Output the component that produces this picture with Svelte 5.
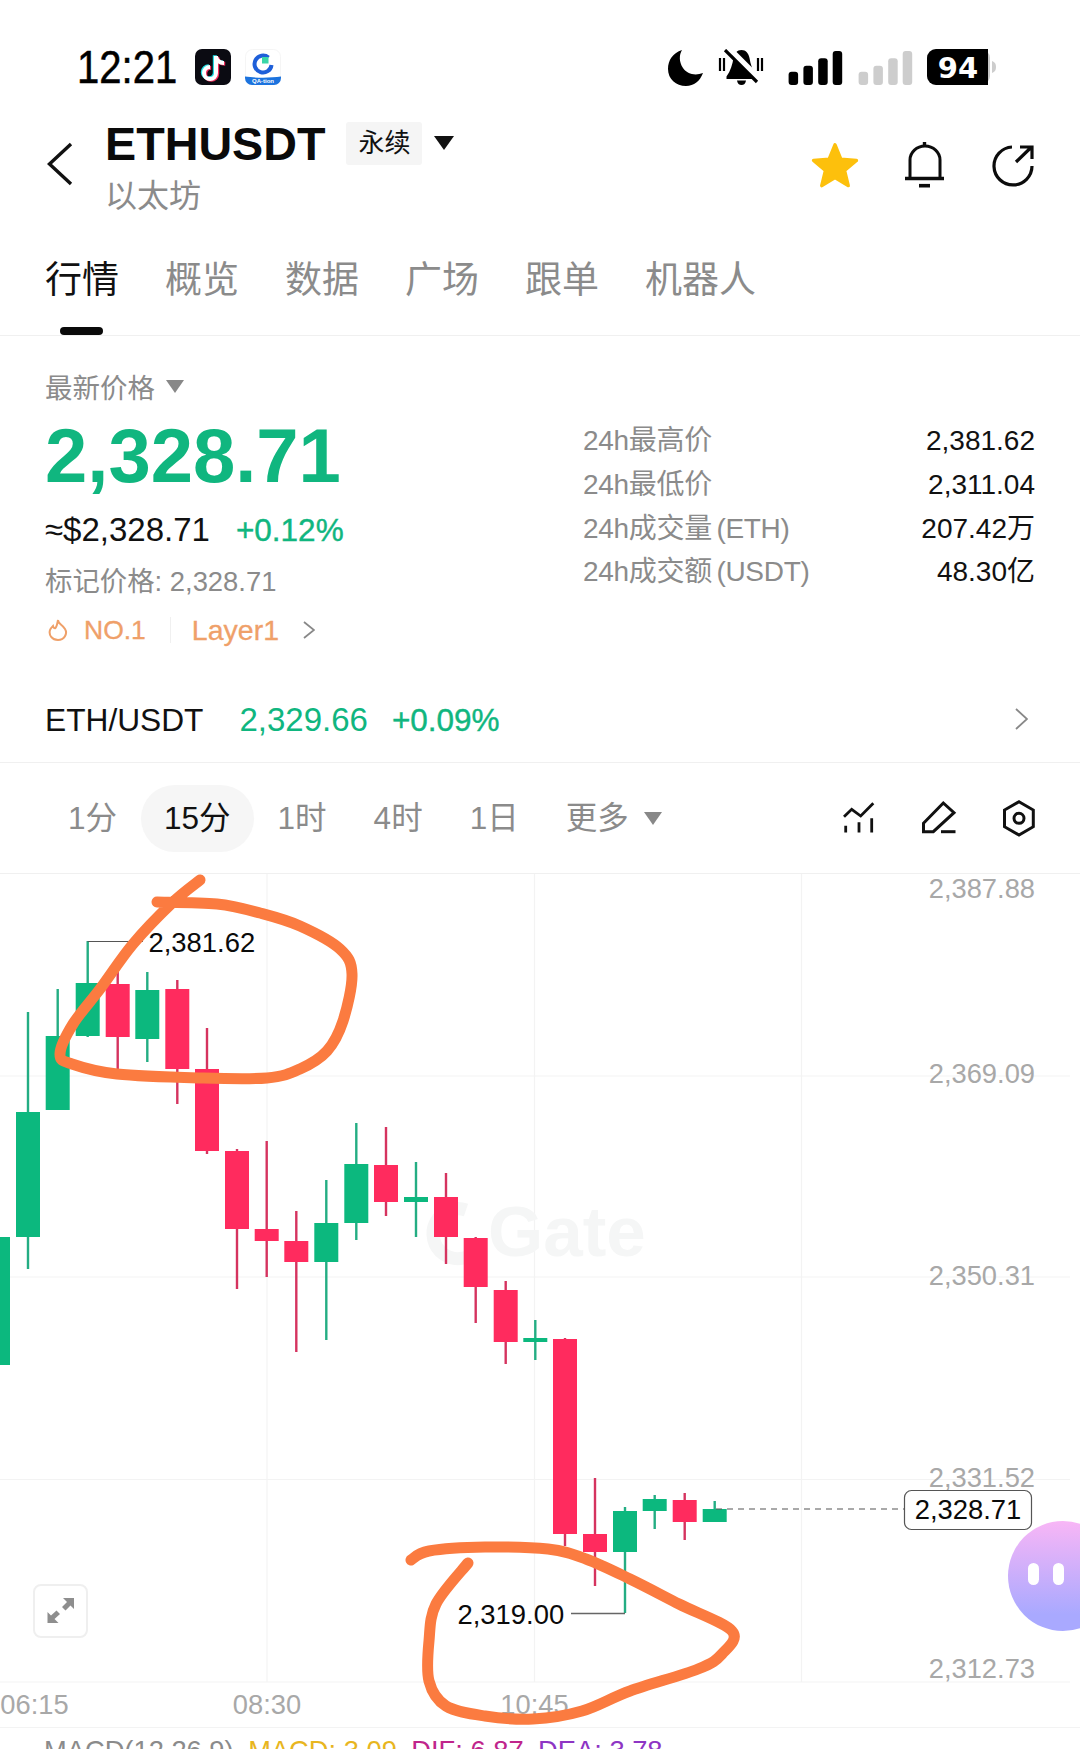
<script>
  // tabs + timeframes
  const tabs = ['行情', '概览', '数据', '广场', '跟单', '机器人'];
  const frames = ['1分', '15分', '1时', '4时', '1日'];
  const stats = [
    ['24h最高价', '2,381.62'],
    ['24h最低价', '2,311.04'],
    ['24h成交量 (ETH)', '207.42万'],
    ['24h成交额 (USDT)', '48.30亿']
  ];

  // candles: x, wick top, wick bottom, body top, body bottom, up?
  const candles = [
    [-2, 1237, 1365, 1237, 1365, 1],
    [28, 1012, 1269, 1112, 1237, 1],
    [57.7, 989, 1110, 1036, 1110, 1],
    [87.7, 941, 1037, 983, 1036, 1],
    [117.7, 966, 1069, 984, 1037, 0],
    [147.3, 972, 1062, 990, 1039, 1],
    [177.3, 980, 1104, 989, 1069, 0],
    [207, 1028, 1154, 1069, 1151, 0],
    [237, 1149, 1289, 1151, 1229, 0],
    [266.7, 1141, 1277, 1229, 1241, 0],
    [296.3, 1211, 1352, 1241, 1262, 0],
    [326.3, 1180, 1340, 1223, 1262, 1],
    [356.3, 1123, 1240, 1164, 1223, 1],
    [386, 1127, 1216, 1165, 1202, 0],
    [416, 1162, 1237, 1197, 1202, 1],
    [446, 1173, 1264, 1197, 1237, 0],
    [475.7, 1237, 1323, 1238, 1287, 0],
    [505.7, 1281, 1364, 1290, 1342, 0],
    [535.3, 1320, 1360, 1338, 1342, 1],
    [565, 1338, 1546, 1339, 1534, 0],
    [595, 1478, 1586, 1534, 1552, 0],
    [625, 1507, 1613, 1511, 1552, 1],
    [654.7, 1495, 1529, 1499, 1511, 1],
    [684.7, 1493, 1540, 1500, 1522, 0],
    [714.7, 1501, 1522, 1509, 1522, 1]
  ];

  const axis = [
    ['2,387.88', 887],
    ['2,369.09', 1072.5],
    ['2,350.31', 1274.5],
    ['2,331.52', 1476],
    ['2,312.73', 1667]
  ];

  // hand drawn circles on the screenshot
  const scribbleTop = [[200,879],[172,902],[133,943],[100,988],[73,1023],[60,1053],[72,1063],[117,1073],[200,1077],[267,1077],[300,1068],[327,1050],[343,1020],[352,973],[340,948],[300,925],[260,912],[217,903],[157,901]];
  const scribbleBottom = [[411,1559],[429,1550],[485,1546],[548,1548],[586,1558],[630,1578],[679,1603],[732,1630],[722,1653],[698,1668],[630,1690],[582,1710],[533,1718],[485,1715],[446,1705],[429,1680],[429,1640],[436,1603],[468,1562]];

  function smooth(p) {
    let d = `M${p[0][0]} ${p[0][1]}`;
    for (let i = 0; i < p.length - 1; i++) {
      const a = p[i - 1] || p[i], b = p[i], c = p[i + 1], e = p[i + 2] || c;
      const c1 = [b[0] + (c[0] - a[0]) / 6, b[1] + (c[1] - a[1]) / 6];
      const c2 = [c[0] - (e[0] - b[0]) / 6, c[1] - (e[1] - b[1]) / 6];
      d += ` C${c1[0].toFixed(1)} ${c1[1].toFixed(1)} ${c2[0].toFixed(1)} ${c2[1].toFixed(1)} ${c[0]} ${c[1]}`;
    }
    return d;
  }
</script>

<div class="page">
  <!-- status bar -->
  <div class="status">
    <span class="time"><span>12:21</span></span>
    <svg class="app" viewBox="0 0 36 36" width="36" height="36">
      <rect width="36" height="36" rx="7" fill="#0b0b12" />
      <g fill="none" stroke-width="4">
        <g stroke="#25e0e6" transform="translate(-1.2 -.8)"><path d="M21 7V24A6 6 0 1 1 15 18" /><path d="M21 8C22 12 25 14 29 14" /></g>
        <g stroke="#f5305f" transform="translate(1.2 .8)"><path d="M21 7V24A6 6 0 1 1 15 18" /><path d="M21 8C22 12 25 14 29 14" /></g>
        <g stroke="#fff"><path d="M21 7V24A6 6 0 1 1 15 18" /><path d="M21 8C22 12 25 14 29 14" /></g>
      </g>
    </svg>
    <svg class="app qa" viewBox="0 0 36 36" width="36" height="36">
      <rect x=".5" y=".5" width="35" height="35" rx="7" fill="#fff" stroke="#f5f5f5" />
      <path d="M23.5 8.5A8.5 8.5 0 1 0 26.5 16" fill="none" stroke="#1e5fd9" stroke-width="4" />
      <rect x="17" y="8" width="6.5" height="6.5" fill="#3ad6a8" />
      <path d="M0 27.5C10 29 26 29 36 27.5V29A7 7 0 0 1 29 36H7A7 7 0 0 1 0 29Z" fill="#1c73de" />
      <text x="18" y="33.6" class="qa-text">QA·tion</text>
    </svg>
    <svg class="sys" viewBox="0 0 330 38" width="330" height="38">
      <path d="M14 1C5 4 0 11 0 20C0 30 8 37 18 37C26 37 32 32 35 24C27 27 19 25 15 19C11 13 11 6 14 1Z" />
      <path d="M73.5 1C69 1 66.5 4.5 65.5 9C64.5 15 62.5 22 58.5 27.5V30H88.5V27.5C84.5 22 82.5 15 81.5 9C80.5 4.5 78 1 73.5 1Z" />
      <path d="M69 31.5H78C77.5 34.5 76 36 73.5 36C71 36 69.5 34.5 69 31.5Z" />
      <path d="M52 9V22M56 9V22M90 9V22M94 9V22" stroke="#000" stroke-width="2.2" fill="none" />
      <path d="M60 -1L92 31" stroke="#fff" stroke-width="6.5" fill="none" />
      <path d="M57 1L89 33" stroke="#000" stroke-width="3.2" fill="none" />
      <rect x="120.6" y="22.7" width="9.5" height="13.3" rx="3" />
      <rect x="135.4" y="16.7" width="9.5" height="19.3" rx="3" />
      <rect x="150.2" y="9.3" width="9.5" height="26.7" rx="3" />
      <rect x="164.7" y="2" width="9.5" height="34" rx="3" />
      <g fill="#cdcdcd">
        <rect x="190.6" y="22.7" width="9.5" height="13.3" rx="3" />
        <rect x="205.4" y="16.7" width="9.5" height="19.3" rx="3" />
        <rect x="220.2" y="9.3" width="9.5" height="26.7" rx="3" />
        <rect x="234.7" y="2" width="9.5" height="34" rx="3" />
      </g>
      <rect x="259" y="0" width="63" height="36" rx="9" fill="#c8c8c8" />
      <path d="M268 0H320V36H268A9 9 0 0 1 259 27V9A9 9 0 0 1 268 0Z" />
      <path d="M324 12C327 13 328 15 328 18C328 21 327 23 324 24Z" fill="#cdcdcd" />
      <text x="290" y="28.6" class="batt">94</text>
    </svg>
  </div>

  <!-- symbol header -->
  <div class="header">
    <svg class="back" viewBox="47 142 26 44" width="26" height="44">
      <path d="M71 144L49.5 164L71 184" fill="none" stroke="#111" stroke-width="3.4" />
    </svg>
    <div class="title">
      <div class="title-row">
        <span class="symbol">ETHUSDT</span>
        <span class="tag">永续</span>
        <span class="caret big"></span>
      </div>
      <div class="sub">以太坊</div>
    </div>
    <div class="actions">
      <svg viewBox="810 141 50 48" width="50" height="48">
        <path d="M835 144.9L840.9 159.3L856.4 160.5L844.5 170.5L848.2 185.6L835 177.4L821.8 185.6L825.5 170.5L813.6 160.5L829.1 159.3Z" fill="#fdc00c" stroke="#fdc00c" stroke-width="3.5" stroke-linejoin="round" />
      </svg>
      <svg viewBox="0 0 40 46" width="40" height="46" fill="none" stroke="#0c0c0c" stroke-width="3">
        <path d="M5 36V18A15 14 0 0 1 35 18V36" />
        <path d="M0 36.5H39" stroke-width="3.4" />
        <path d="M14 43.7H25" stroke-width="3.6" />
        <path d="M19.5 0V5" stroke-width="3.4" />
      </svg>
      <svg viewBox="990 144 46 44" width="46" height="44" fill="none" stroke="#0c0c0c" stroke-width="3.2">
        <path d="M1012 148A19 19 0 1 0 1032 167" />
        <path d="M1016 163L1031 148.5M1020 148H1032V160" />
      </svg>
    </div>
  </div>

  <!-- tabs -->
  <div class="tabs">
    {#each tabs as tab, i}
      <div class="tab {i === 0 ? 'active' : ''}">{tab}</div>
    {/each}
    <div class="indicator"></div>
  </div>

  <!-- price block -->
  <div class="price">
    <div class="left">
      <div class="latest">最新价格 <span class="caret grey"></span></div>
      <div class="big">2,328.71</div>
      <div class="fiat">≈$2,328.71<span class="pct">+0.12%</span></div>
      <div class="mark">标记价格: 2,328.71</div>
      <div class="labels">
        <svg viewBox="0 0 20 22" width="20" height="22" fill="none" stroke="#efa069" stroke-width="2">
          <path d="M10 1C10 5 14 5 17 10C20 15 16 21 10 21C4 21 .5 16 2 11C2.8 9 4 8 5 7C5.5 9 6.5 9.5 7.5 9C9 7 9.5 4 10 1Z" />
        </svg>
        <span class="no1">NO.1</span>
        <span class="split"></span>
        <span class="layer">Layer1</span>
        <svg class="more" viewBox="0 0 12 18" width="12" height="18" fill="none" stroke="#888" stroke-width="1.8">
          <path d="M1 1L11 9L1 17" />
        </svg>
      </div>
    </div>
    <div class="right">
      {#each stats as s}
        <div class="stat"><span class="k">{s[0]}</span><span class="v">{s[1]}</span></div>
      {/each}
    </div>
  </div>

  <!-- spot pair -->
  <div class="pair">
    <span class="pair-name">ETH/USDT</span>
    <span class="pair-price">2,329.66</span>
    <span class="pair-pct">+0.09%</span>
    <svg class="pair-go" viewBox="0 0 13 22" width="13" height="22" fill="none" stroke="#888" stroke-width="1.8">
      <path d="M1 1L12 11L1 21" />
    </svg>
  </div>

  <!-- timeframes -->
  <div class="frames">
    {#each frames as f, i}
      <div class="frame {i === 1 ? 'on' : ''}">{f}</div>
    {/each}
    <div class="frame">更多 <span class="caret grey wide"></span></div>
    <div class="tools">
      <svg viewBox="840 800 38 36" width="38" height="36" fill="none" stroke="#111" stroke-width="2.8">
        <path d="M844 816.7L851.7 809.3L860.7 816L873.3 803.3" />
        <path d="M845.7 825.7V832.5M859 822.3V832.5M871.7 818.3V832.5" />
      </svg>
      <svg viewBox="920 800 38 36" width="38" height="36" fill="none" stroke="#111" stroke-width="3">
        <path d="M923.5 823.3L943.3 803L954 812.7L933.3 831.7H923.5Z" />
        <path d="M941 831.7H955.5" />
      </svg>
      <svg viewBox="1000 798 38 40" width="38" height="40" fill="none" stroke="#111" stroke-width="3">
        <path d="M1019 801.7L1033.3 810V826.7L1019 835L1004.5 826.7V810Z" />
        <circle cx="1019" cy="818.3" r="5" />
      </svg>
    </div>
  </div>

  <!-- chart -->
  <div class="chart">
    <svg class="plot" viewBox="0 873 1080 853" width="1080" height="853">
      <g stroke="#f3f3f3" stroke-width="1.2">
        <path d="M0 1075H1070M0 1276H1070M0 1478.5H1070M0 1681H1070" />
        <path d="M267 873V1681M534.5 873V1681M801.5 873V1681" />
      </g>

      <path d="M466 1209A25 25 0 1 0 476 1250" fill="none" stroke="#f5f6f6" stroke-width="13" />
      <text x="488" y="1255" class="mark-logo">Gate</text>

      <g transform="translate(0 -1)">
        {#each candles as c}
          <line x1={c[0]} x2={c[0]} y1={c[1]} y2={c[2]} stroke={c[5] ? '#23ad83' : '#d5335f'} stroke-width="2.4" />
          <rect x={c[0] - 12} y={c[3]} width="24" height={c[4] - c[3]} fill={c[5] ? '#0cb87e' : '#ff2b5e'} />
        {/each}
      </g>

      <path d="M87.7 940.5H143" stroke="#555" stroke-width="1.2" fill="none" />
      <text x="148.5" y="950.5" class="val">2,381.62</text>
      <path d="M571 1612.5H625" stroke="#666" stroke-width="1.4" fill="none" />
      <text x="457.5" y="1622.5" class="val">2,319.00</text>

      {#each axis as a}
        <text x="1035" y={a[1] + 9.5} class="axis">{a[0]}</text>
      {/each}

      <text x="34.5" y="1712.5" class="axis mid">06:15</text>
      <text x="267" y="1712.5" class="axis mid">08:30</text>
      <text x="534.5" y="1712.5" class="axis mid">10:45</text>

      <path d="M716 1508H905" stroke="#555" stroke-width="1.2" stroke-dasharray="6 5" fill="none" />
      <rect x="904.5" y="1489.5" width="127" height="39" rx="7" fill="#fff" stroke="#555" stroke-width="1.2" />
      <text x="968" y="1518" class="val mid">2,328.71</text>

      <g fill="none" stroke="#fb7b40" stroke-width="11" stroke-linecap="round" stroke-linejoin="round">
        <path d={smooth(scribbleTop)} />
        <path d={smooth(scribbleBottom)} />
      </g>
    </svg>

    <div class="expand">
      <svg viewBox="47 1598 28 28" width="28" height="28" fill="#8e8e8e">
        <path d="M63 1599H74V1610L70.5 1606.5L65.5 1611.5L62 1608L67 1603Z" />
        <path d="M47.5 1624V1613L51 1616.5L56.5 1611.5L60 1615L54.5 1620L58.5 1624Z" />
      </svg>
    </div>
    <div class="bot"><i></i><i></i></div>
  </div>

  <!-- indicator legend, cut off by the page end -->
  <div class="legend">
    <span class="g">MACD(12,26,9)</span>
    <span class="y">MACD: 3.09</span>
    <span class="m">DIF: 6.87</span>
    <span class="p">DEA: 3.78</span>
  </div>
</div>

<style>
  :global(body) {
    margin: 0;
    background: #fff;
  }
  .page {
    width: 1080px;
    height: 1749px;
    overflow: hidden;
    background: #fff;
    color: #111;
    font-family: "Liberation Sans", "Noto Sans CJK SC", sans-serif;
  }

  .status {
    height: 100px;
    box-sizing: border-box;
    padding: 49px 0 0 77px;
    display: flex;
    align-items: flex-start;
  }
  .time {
    width: 118px;
    font-size: 46px;
    line-height: 36px;
    color: #000;
  }
  .time span {
    display: inline-block;
    transform: scaleX(0.87);
    transform-origin: left center;
    -webkit-text-stroke: 0.5px #000;
  }
  .app.qa {
    margin-left: 14px;
  }
  .qa-text {
    font-size: 6px;
    font-weight: 700;
    fill: #fff;
    text-anchor: middle;
  }
  .sys {
    margin-left: 387px;
  }
  .batt {
    font-family: "DejaVu Sans", sans-serif;
    font-weight: 700;
    font-size: 29px;
    fill: #fff;
    text-anchor: middle;
  }

  .header {
    height: 125px;
    display: flex;
    align-items: flex-start;
  }
  .back {
    margin: 42px 0 0 47px;
  }
  .title {
    margin: 19px 0 0 32px;
  }
  .title-row {
    display: flex;
    align-items: center;
    height: 50px;
  }
  .symbol {
    font-size: 46.7px;
    font-weight: 700;
    color: #0a0a0a;
  }
  .tag {
    margin-left: 21px;
    margin-top: -2px;
    width: 76px;
    height: 43px;
    line-height: 43px;
    text-align: center;
    font-size: 26px;
    background: #f5f5f5;
    border-radius: 3px;
  }
  .caret {
    display: inline-block;
    width: 0;
    height: 0;
    border-style: solid;
    border-color: transparent;
  }
  .caret.big {
    margin-left: 12px;
    margin-top: -3px;
    border-width: 14px 10px 0;
    border-top-color: #111;
  }
  .caret.grey {
    margin-left: 3px;
    vertical-align: 5px;
    border-width: 13px 9px 0;
    border-top-color: #888;
  }
  .caret.grey.wide {
    margin-left: 7px;
    vertical-align: 4px;
  }
  .sub {
    margin-top: 7px;
    line-height: 40px;
    font-size: 32px;
    color: #8b8b8b;
  }
  .actions {
    margin: 40px 44px 0 auto;
    height: 50px;
    display: flex;
    align-items: center;
    gap: 45px;
  }

  .tabs {
    position: relative;
    height: 111px;
    box-sizing: border-box;
    padding: 36px 0 0 45px;
    display: flex;
    gap: 46px;
    border-bottom: 1px solid #f0f0f0;
  }
  .tab {
    font-size: 37px;
    line-height: 40px;
    color: #8b8b8b;
  }
  .tab.active {
    color: #111;
  }
  .indicator {
    position: absolute;
    left: 60px;
    bottom: 0;
    width: 43px;
    height: 8px;
    border-radius: 4px;
    background: #0a0a0a;
  }

  .price {
    height: 338px;
    display: flex;
  }
  .left {
    width: 538px;
    padding: 35px 0 0 45px;
  }
  .latest {
    font-size: 27.5px;
    line-height: 36px;
    color: #8b8b8b;
  }
  .big {
    margin-top: 9px;
    font-size: 76px;
    font-weight: 700;
    line-height: 80px;
    color: #10b67f;
  }
  .fiat {
    margin-top: 14px;
    font-size: 33px;
    line-height: 40px;
    color: #111;
  }
  .pct {
    margin-left: 26px;
    font-size: 31.5px;
    color: #10b67f;
    -webkit-text-stroke: 0.4px #10b67f;
  }
  .mark {
    margin-top: 14px;
    font-size: 27.4px;
    line-height: 36px;
    color: #8b8b8b;
  }
  .labels {
    margin-top: 12px;
    height: 36px;
    display: flex;
    align-items: center;
    margin-left: 3px;
    font-size: 26.5px;
    color: #efa069;
    -webkit-text-stroke: 0.3px #efa069;
  }
  .no1 {
    margin-left: 16px;
  }
  .layer {
    font-size: 28.5px;
  }
  .split {
    width: 1px;
    height: 26px;
    margin: 0 21px 0 24px;
    background: #f0f0f0;
  }
  .more {
    margin-left: 24px;
  }
  .right {
    flex: 1;
    padding: 83px 45px 0 0;
  }
  .stat {
    display: flex;
    justify-content: space-between;
    height: 44px;
    line-height: 43px;
    font-size: 28px;
  }
  .stat:last-child {
    margin-top: -1px;
  }
  .k {
    color: #8b8b8b;
    word-spacing: -3px;
    letter-spacing: -0.3px;
  }

  .pair {
    height: 82px;
    padding-top: 6px;
    border-bottom: 1px solid #f0f0f0;
    padding-left: 45px;
    display: flex;
    align-items: flex-start;
    font-size: 33px;
    line-height: 80px;
    color: #10b67f;
  }
  .pair-name {
    font-size: 31.7px;
    color: #111;
  }
  .pair-price {
    margin-left: 36px;
  }
  .pair-pct {
    margin-left: 24px;
    font-size: 31.5px;
    -webkit-text-stroke: 0.4px #10b67f;
  }
  .pair-go {
    margin: 28px 52px 0 auto;
  }

  .frames {
    height: 110px;
    border-bottom: 1px solid #f0f0f0;
    padding-left: 44.5px;
    display: flex;
    align-items: center;
    font-size: 31.5px;
    color: #8b8b8b;
  }
  .frame {
    padding: 0 23.5px;
    height: 67px;
    line-height: 67px;
    border-radius: 34px;
  }
  .frame.on {
    background: #f6f6f6;
    color: #111;
  }
  .tools {
    margin-left: auto;
    margin-right: 42px;
    display: flex;
    align-items: center;
    gap: 42px;
  }

  .chart {
    position: relative;
    height: 853px;
  }
  .plot {
    display: block;
    overflow: visible;
  }
  .val {
    font-size: 27.4px;
    fill: #0a0a0a;
  }
  .axis {
    font-size: 27.3px;
    fill: #a8a8a8;
    text-anchor: end;
  }
  .mid {
    text-anchor: middle;
  }
  .mark-logo {
    font-size: 71px;
    font-weight: 700;
    fill: #f5f6f6;
  }
  .expand {
    position: absolute;
    left: 33px;
    top: 710px;
    width: 55px;
    height: 54px;
    box-sizing: border-box;
    border: 2px solid #efefef;
    border-radius: 8px;
    display: flex;
    align-items: center;
    justify-content: center;
  }
  .bot {
    position: absolute;
    left: 1008px;
    top: 647px;
    width: 110px;
    height: 110px;
    border-radius: 50%;
    background: linear-gradient(#f8b6f6, #a9a9ff 85%);
  }
  .bot i {
    position: absolute;
    top: 42px;
    width: 11px;
    height: 22px;
    border-radius: 6px;
    background: #fff;
  }
  .bot i:first-child {
    left: 20px;
  }
  .bot i:last-child {
    left: 45px;
  }

  .legend {
    border-top: 1px solid #f3f3f3;
    padding: 5px 0 0 44px;
    display: flex;
    gap: 14.5px;
    font-size: 27.3px;
    line-height: 36px;
  }
  .g {
    color: #8b8b8b;
  }
  .y {
    color: #e8b61f;
  }
  .m {
    color: #c0258c;
  }
  .p {
    color: #8e35c4;
  }
</style>
